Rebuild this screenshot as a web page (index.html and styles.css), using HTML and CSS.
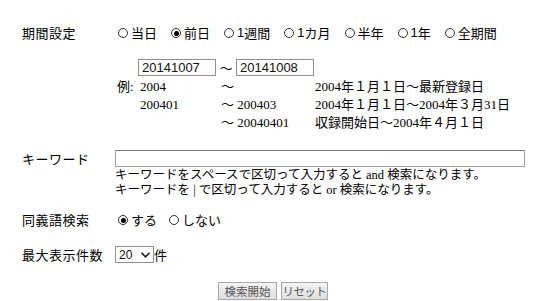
FILE: index.html
```html
<!DOCTYPE html>
<html lang="ja">
<head>
    <meta charset="UTF-8">
    <title>検索条件</title>
    <link rel="stylesheet" href="styles.css">
</head>
<body>
    <form class="search-form">
        <div class="form-row">
            <div class="row-label">期間設定</div>
            <div class="row-field">
                <div class="radio-group">
                    <label class="radio"><input type="radio" name="period">当日</label>
                    <label class="radio"><input type="radio" name="period" checked>前日</label>
                    <label class="radio"><input type="radio" name="period"><span class="num">1</span>週間</label>
                    <label class="radio"><input type="radio" name="period"><span class="num">1</span>カ月</label>
                    <label class="radio"><input type="radio" name="period">半年</label>
                    <label class="radio"><input type="radio" name="period"><span class="num">1</span>年</label>
                    <label class="radio"><input type="radio" name="period">全期間</label>
                </div>

                <div class="date-range">
                    <input type="text" class="date-input" value="20141007">
                    <span class="tilde">～</span>
                    <input type="text" class="date-input" value="20141008">
                </div>

                <div class="examples">
                    <span class="ex-head">例:</span>
                    <span>2004</span>
                    <span>～</span>
                    <span>2004年１月１日～最新登録日</span>

                    <span></span>
                    <span>200401</span>
                    <span>～ 200403</span>
                    <span>2004年１月１日～2004年３月31日</span>

                    <span></span>
                    <span></span>
                    <span>～ 20040401</span>
                    <span>収録開始日～2004年４月１日</span>
                </div>
            </div>
        </div>

        <div class="form-row keyword-row">
            <div class="row-label">キーワード</div>
            <div class="row-field">
                <input type="text" class="keyword-input">
                <div class="help">
                    キーワードをスペースで区切って入力すると and 検索になります。<br>
                    キーワードを | で区切って入力すると or 検索になります。
                </div>
            </div>
        </div>

        <div class="form-row synonym-row">
            <div class="row-label">同義語検索</div>
            <div class="row-field">
                <div class="radio-group">
                    <label class="radio"><input type="radio" name="synonym" checked>する</label>
                    <label class="radio"><input type="radio" name="synonym">しない</label>
                </div>
            </div>
        </div>

        <div class="form-row count-row">
            <div class="row-label">最大表示件数</div>
            <div class="row-field count-field">
                <div class="select-wrap">
                    <select class="count-select">
                        <option>10</option>
                        <option selected>20</option>
                        <option>50</option>
                        <option>100</option>
                    </select>
                    <svg class="chevron" width="9" height="6" viewBox="0 0 9 6">
                        <path d="M0.5 0.8 L4.5 4.8 L8.5 0.8" fill="none" stroke="#222" stroke-width="1.6"/>
                    </svg>
                </div>
                <span>件</span>
            </div>
        </div>

        <div class="buttons">
            <button type="submit" class="btn-search">検索開始</button>
            <button type="reset" class="btn-reset">リセット</button>
        </div>
    </form>
</body>
</html>
```

FILE: styles.css
```css
body {
    margin: 0;
    padding: 0;
    background-color: #fff;
    color: #000;
    font-family: "Liberation Serif", "Noto Sans CJK JP", serif;
    font-size: 13px;
}

.search-form {
    padding: 24px 0 0 22px;
    width: 510px;
}

.form-row {
    display: flex;
}

.row-label {
    width: 93px;
    flex-shrink: 0;
    line-height: 18px;
    font-family: "Noto Sans CJK JP", sans-serif;
    letter-spacing: 0.5px;
}

.row-field {
    flex: 1;
}

.radio-group {
    display: flex;
    gap: 14px;
    padding-left: 3px;
    line-height: 18px;
    font-family: "Noto Sans CJK JP", sans-serif;
}

.radio {
    display: flex;
    align-items: center;
}

.radio .num {
    font-family: "Liberation Sans", sans-serif;
}

.radio input {
    appearance: none;
    -webkit-appearance: none;
    width: 10px;
    height: 10px;
    margin: 0 3px 0 0;
    border: 1px solid #333;
    border-radius: 50%;
    box-sizing: border-box;
    position: relative;
}

.radio input:checked::after {
    content: "";
    position: absolute;
    left: 1.5px;
    top: 1.5px;
    width: 5px;
    height: 5px;
    border-radius: 50%;
    background-color: #000;
}

.date-range {
    display: flex;
    align-items: center;
    margin-top: 16px;
    padding-left: 23px;
}

.date-input {
    width: 78px;
    height: 17px;
    padding: 0 3px;
    border: 1px solid #8f8f8f;
    box-sizing: border-box;
    font-family: "Liberation Sans", sans-serif;
    font-size: 13px;
    color: #111;
}

.tilde {
    width: 20px;
    text-align: center;
    font-family: "Noto Sans CJK JP", sans-serif;
}

.examples {
    display: grid;
    grid-template-columns: 23px 81px 94px auto;
    line-height: 18px;
    padding-left: 2px;
    margin-top: 1px;
}

.keyword-row {
    margin-top: 18px;
}

.keyword-input {
    display: block;
    width: 410px;
    height: 17px;
    border: 1px solid #a0a0a0;
    border-top-color: #7a7a7a;
    box-sizing: border-box;
}

.help {
    line-height: 15px;
    margin-top: 1px;
    font-size: 12.5px;
}

.synonym-row {
    margin-top: 13px;
}

.synonym-row .radio-group {
    gap: 12px;
}

.count-row {
    margin-top: 16px;
    align-items: center;
}

.count-field {
    display: flex;
    align-items: center;
    font-family: "Noto Sans CJK JP", sans-serif;
}

.select-wrap {
    position: relative;
}

.count-select {
    appearance: none;
    -webkit-appearance: none;
    width: 39px;
    height: 17px;
    padding: 0 0 0 3px;
    border: 1px solid #8f8f8f;
    border-radius: 0;
    background-color: #fff;
    font-family: "Liberation Sans", sans-serif;
    font-size: 12px;
    color: #111;
    display: block;
}

.chevron {
    position: absolute;
    right: 4px;
    top: 6px;
    pointer-events: none;
}

.buttons {
    display: flex;
    justify-content: center;
    gap: 4px;
    margin-top: 18px;
    padding-right: 8px;
}

button {
    height: 18px;
    border: 1px solid #a8a8a8;
    border-radius: 0;
    background: linear-gradient(#f4f4f4, #dedede);
    color: #555;
    font-family: "Noto Sans CJK JP", sans-serif;
    font-size: 11.5px;
    line-height: 16px;
    cursor: pointer;
}

.btn-search {
    width: 59px;
    padding: 0;
}

.btn-reset {
    width: 47px;
    padding: 0;
    letter-spacing: -0.5px;
}
```
